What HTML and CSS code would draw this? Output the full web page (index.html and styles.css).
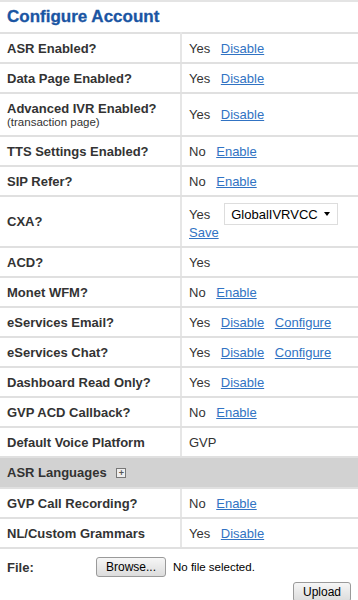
FILE: index.html
```html
<!DOCTYPE html>
<html lang="en">
<head>
  <meta charset="UTF-8" />
  <title>Configure Account</title>
  <link rel="stylesheet" href="styles.css">
</head>
<body>

  <div class="account">
    <h2 class="title">Configure Account</h2>

    <table class="settings">
      <tr>
        <td class="label">ASR Enabled?</td>
        <td class="value">Yes <a href="#">Disable</a></td>
      </tr>
      <tr>
        <td class="label">Data Page Enabled?</td>
        <td class="value">Yes <a href="#">Disable</a></td>
      </tr>
      <tr class="tall">
        <td class="label">Advanced IVR Enabled?<div class="note">(transaction page)</div></td>
        <td class="value">Yes <a href="#">Disable</a></td>
      </tr>
      <tr>
        <td class="label">TTS Settings Enabled?</td>
        <td class="value">No <a href="#">Enable</a></td>
      </tr>
      <tr>
        <td class="label">SIP Refer?</td>
        <td class="value">No <a href="#">Enable</a></td>
      </tr>
      <tr class="cxa">
        <td class="label">CXA?</td>
        <td class="value">
          <div class="cxa-line">Yes
            <span class="select">GlobalIVRVCC <span class="arrow"></span></span>
          </div>
          <a href="#" class="save">Save</a>
        </td>
      </tr>
      <tr>
        <td class="label">ACD?</td>
        <td class="value">Yes</td>
      </tr>
      <tr>
        <td class="label">Monet WFM?</td>
        <td class="value">No <a href="#">Enable</a></td>
      </tr>
      <tr>
        <td class="label">eServices Email?</td>
        <td class="value">Yes <a href="#">Disable</a> <a href="#">Configure</a></td>
      </tr>
      <tr>
        <td class="label">eServices Chat?</td>
        <td class="value">Yes <a href="#">Disable</a> <a href="#">Configure</a></td>
      </tr>
      <tr>
        <td class="label">Dashboard Read Only?</td>
        <td class="value">Yes <a href="#">Disable</a></td>
      </tr>
      <tr>
        <td class="label">GVP ACD Callback?</td>
        <td class="value">No <a href="#">Enable</a></td>
      </tr>
      <tr>
        <td class="label">Default Voice Platform</td>
        <td class="value">GVP</td>
      </tr>
      <tr class="group">
        <td colspan="2">ASR Languages <span class="plus">+</span></td>
      </tr>
      <tr>
        <td class="label">GVP Call Recording?</td>
        <td class="value">No <a href="#">Enable</a></td>
      </tr>
      <tr>
        <td class="label">NL/Custom Grammars</td>
        <td class="value">Yes <a href="#">Disable</a></td>
      </tr>
    </table>

    <div class="upload">
      <div class="file-line">
        <span class="file-label">File:</span>
        <button class="btn">Browse...</button>
        <span class="file-name">No file selected.</span>
      </div>
      <div class="upload-line">
        <button class="btn">Upload</button>
      </div>
    </div>
  </div>

</body>
</html>
```

FILE: styles.css
```css
body {
  margin: 0;
  background-color: #fff;
  font-family: 'Liberation Sans', Arial, sans-serif;
  font-size: 13px;
  color: #333;
}

.account {
  width: 358px;
}

.title {
  margin: 0;
  height: 30px;
  line-height: 30px;
  padding-left: 7px;
  border-top: 2px solid #e4e4e4;
  font-size: 17px;
  color: #1a55a3;
  -webkit-text-stroke: 0.3px #1a55a3;
}

/* table of settings */
.settings {
  width: 100%;
  border-collapse: collapse;
  border-top: 2px solid #e0e0e0;
}

.settings td {
  height: 28px;
  padding: 0;
  border-bottom: 2px solid #e0e0e0;
}

.settings .label {
  width: 173px;
  padding-left: 7px;
  font-weight: bold;
}

.settings .value {
  padding-left: 7px;
  border-left: 2px solid #e6e6e6;
}

.value a {
  margin-left: 7px;
}

a {
  color: #3173c3;
}

.tall td {
  height: 41px;
}

.note {
  font-size: 11.5px;
  font-weight: normal;
  line-height: 13px;
}

.cxa td {
  height: 49px;
}

.cxa-line {
  display: flex;
  align-items: center;
  gap: 14px;
}

.select {
  display: flex;
  align-items: center;
  justify-content: space-between;
  box-sizing: border-box;
  width: 114px;
  height: 22px;
  padding: 0 7px 0 6px;
  border: 1px solid #ddd;
  font-size: 13px;
  color: #000;
}

.arrow {
  width: 0;
  height: 0;
  border-left: 3.5px solid transparent;
  border-right: 3.5px solid transparent;
  border-top: 4px solid #000;
}

.value .save {
  margin-left: 0;
}

.group td {
  height: 29px;
  padding-left: 7px;
  background-color: #d2d2d2;
  font-weight: bold;
}

.plus {
  display: inline-block;
  width: 8px;
  height: 8px;
  margin-left: 6px;
  border: 1px solid #777;
  background-color: #eee;
  font-size: 9px;
  line-height: 8px;
  text-align: center;
  font-weight: bold;
  color: #555;
  vertical-align: 1px;
}

/* upload form */
.upload {
  padding: 8px 7px 0 7px;
}

.file-line {
  display: flex;
  align-items: center;
}

.file-label {
  width: 89px;
  font-weight: bold;
}

.file-name {
  margin-left: 7px;
  font-size: 11.5px;
  color: #000;
}

.btn {
  height: 20px;
  padding: 0 9px;
  border: 1px solid #9a9a9a;
  border-radius: 3px;
  background: linear-gradient(#f6f6f6, #dcdcdc);
  font-family: 'Liberation Sans', Arial, sans-serif;
  font-size: 12px;
  color: #000;
}

.upload-line {
  display: flex;
  justify-content: flex-end;
  padding-top: 5px;
}
```
